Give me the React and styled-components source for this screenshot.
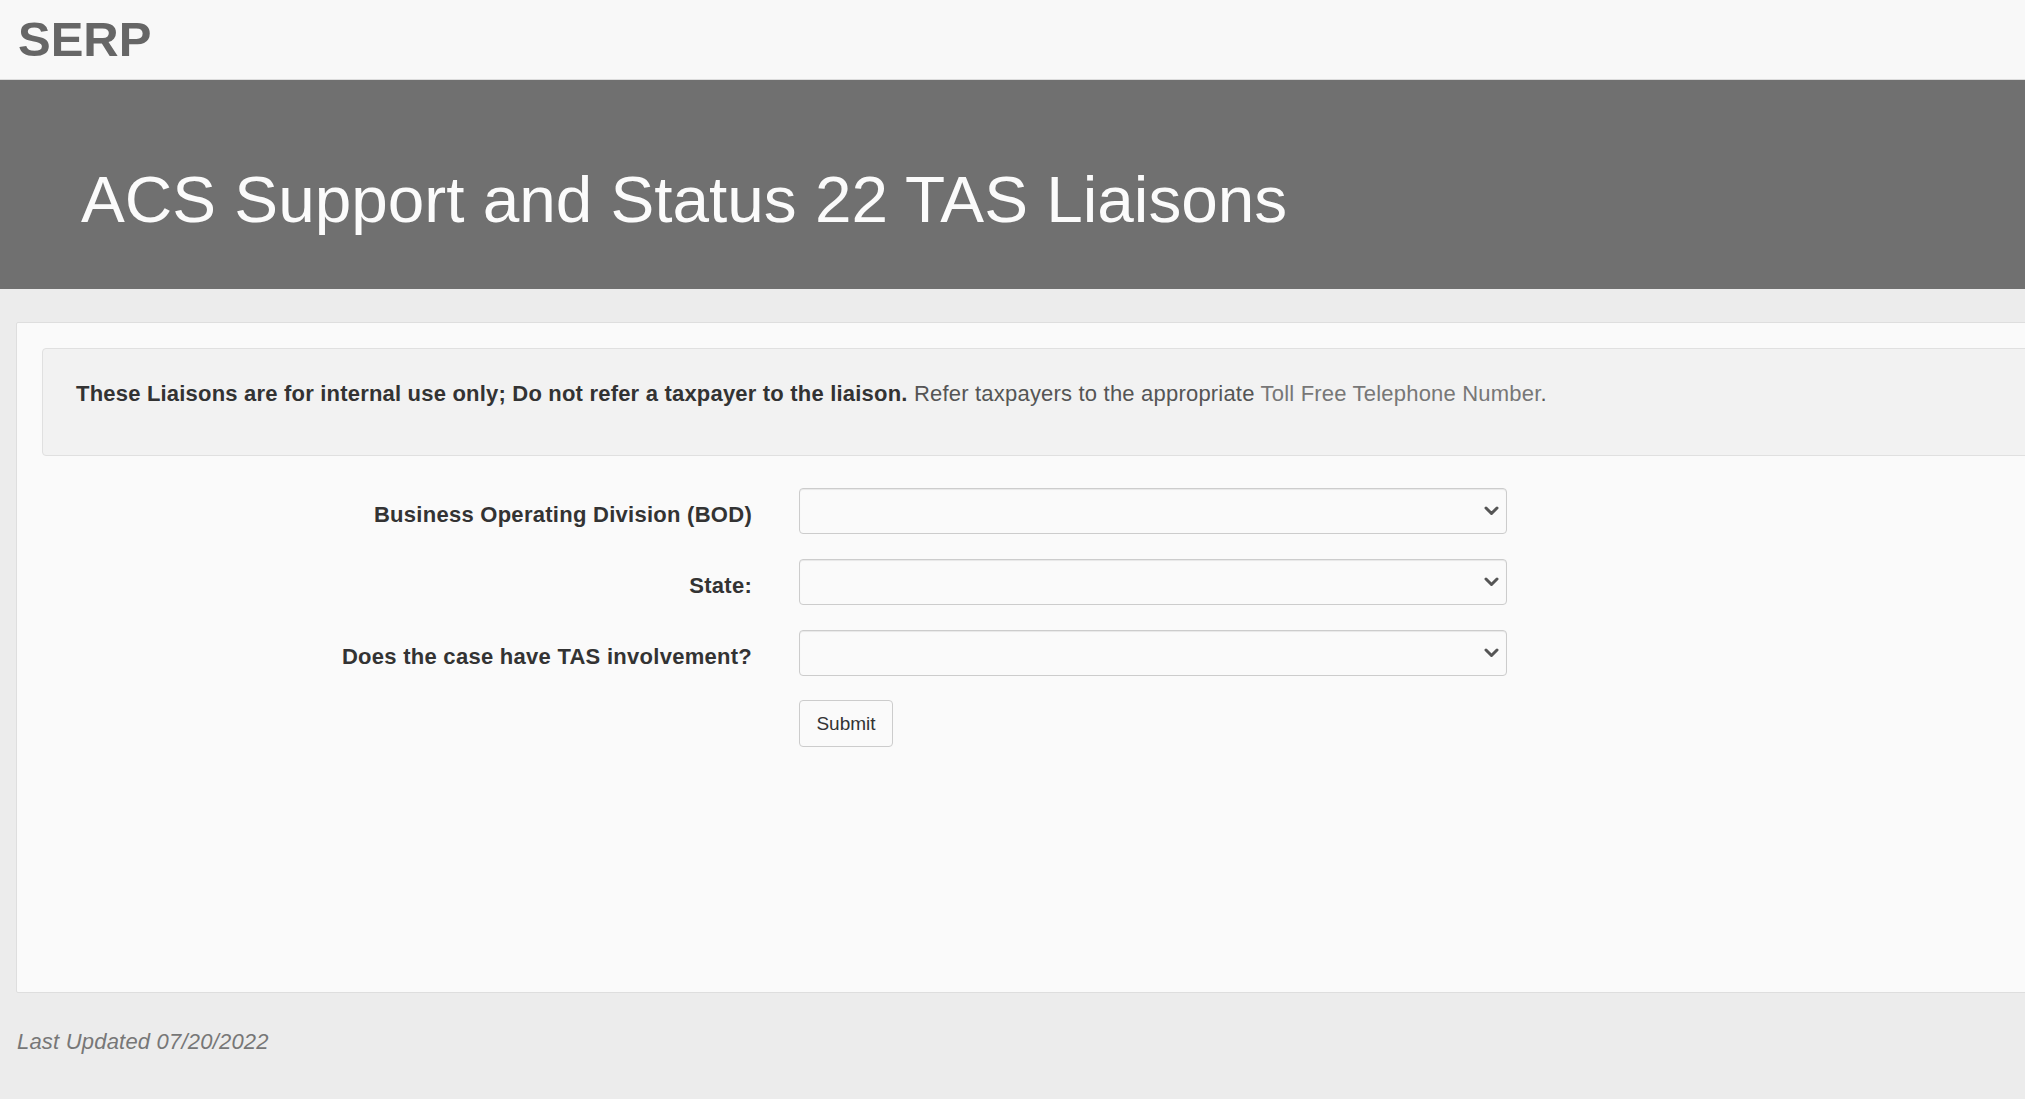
import React from "react";
import styled, { createGlobalStyle } from "styled-components";

const GlobalStyle = createGlobalStyle`
  html, body {
    margin: 0;
    padding: 0;
    background: #ececec;
    overflow-x: hidden;
  }
  body {
    font-family: "Liberation Sans", Arial, sans-serif;
    color: #333;
  }
  * {
    box-sizing: border-box;
  }
`;

const Page = styled.div`
  min-height: 1099px;
  background: #ececec;
`;

const TopBar = styled.div`
  height: 80px;
  display: flex;
  align-items: center;
  padding-left: 18px;
  background: #f8f8f8;
  border-bottom: 1px solid #dcdcdc;
`;

const Brand = styled.div`
  font-size: 49px;
  font-weight: bold;
  line-height: 1.1;
  color: #666;
`;

const Jumbotron = styled.div`
  height: 209px;
  background: #707070;
  padding: 84px 0 0 81px;
`;

const Title = styled.h1`
  margin: 0;
  font-size: 65.7px;
  font-weight: normal;
  line-height: 1.1;
  color: #fbfbfb;
  white-space: nowrap;
`;

const Panel = styled.div`
  margin: 33px -40px 0 16px;
  padding: 25px 25px 245px 25px;
  background: #fafafa;
  border: 1px solid #dedede;
  border-radius: 2px;
`;

const Alert = styled.div`
  padding: 29px 33px 46px 33px;
  background: #f2f2f2;
  border: 1px solid #e0e0e0;
  border-radius: 4px;
  font-size: 22px;
  letter-spacing: 0.2px;
  line-height: 1.42857;
  color: #555;
  white-space: nowrap;

  b {
    color: #333;
  }
`;

const Link = styled.a`
  color: #777;
  text-decoration: none;
`;

const Form = styled.form`
  display: grid;
  grid-template-columns: 710px 708px;
  column-gap: 47px;
  row-gap: 25px;
  margin-top: 32px;
`;

const Label = styled.label`
  display: flex;
  align-items: center;
  justify-content: flex-end;
  padding-top: 7px;
  font-size: 22px;
  letter-spacing: 0.27px;
  font-weight: bold;
  color: #333;
`;

const SelectWrap = styled.div`
  position: relative;
  height: 46px;
`;

const Select = styled.select`
  appearance: none;
  -webkit-appearance: none;
  width: 100%;
  height: 46px;
  padding: 0 40px 0 16px;
  font-size: 22px;
  font-family: inherit;
  color: #555;
  background: #fafafa;
  border: 1px solid #cccccc;
  border-radius: 4px;
  box-shadow: inset 0 1px 1px rgba(0, 0, 0, 0.075);
`;

const Chevron = styled.svg`
  position: absolute;
  right: 8px;
  top: 18px;
  width: 15px;
  height: 10px;
  pointer-events: none;
`;

const Spacer = styled.div``;

const Button = styled.button`
  width: 94px;
  height: 47px;
  margin-top: -1px;
  padding: 0;
  font-family: inherit;
  font-size: 19px;
  color: #333;
  background: #fafafa;
  border: 1px solid #cccccc;
  border-radius: 4px;
`;

const Footer = styled.div`
  margin: 33px 0 0 17px;
  font-size: 22px;
  letter-spacing: 0.2px;
  line-height: 1.42857;
  font-style: italic;
  color: #777;
`;

function Field({ label }) {
  return (
    <>
      <Label>{label}</Label>
      <SelectWrap>
        <Select defaultValue="">
          <option value=""></option>
        </Select>
        <Chevron viewBox="0 0 15 10">
          <path d="M2 2 L7.5 7.5 L13 2" fill="none" stroke="#555" strokeWidth="3" strokeLinecap="round" strokeLinejoin="round" />
        </Chevron>
      </SelectWrap>
    </>
  );
}

export default function App() {
  return (
    <Page>
      <GlobalStyle />
      <TopBar>
        <Brand>SERP</Brand>
      </TopBar>
      <Jumbotron>
        <Title>ACS Support and Status 22 TAS Liaisons</Title>
      </Jumbotron>
      <Panel>
        <Alert>
          <b>These Liaisons are for internal use only; Do not refer a taxpayer to the liaison.</b>{" "}
          Refer taxpayers to the appropriate <Link href="#">Toll Free Telephone Number</Link>.
        </Alert>
        <Form onSubmit={(e) => e.preventDefault()}>
          <Field label="Business Operating Division (BOD)" />
          <Field label="State:" />
          <Field label="Does the case have TAS involvement?" />
          <Spacer />
          <div>
            <Button type="submit">Submit</Button>
          </div>
        </Form>
      </Panel>
      <Footer>Last Updated 07/20/2022</Footer>
    </Page>
  );
}
